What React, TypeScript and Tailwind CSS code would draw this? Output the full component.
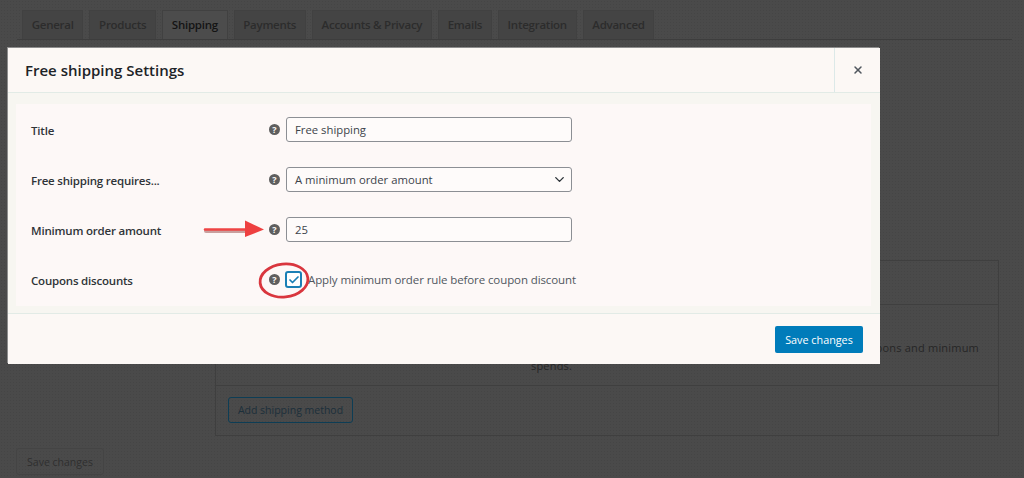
import React from 'react';
import { ChevronDown, Check, X } from 'lucide-react';

const TABS = ['General', 'Products', 'Shipping', 'Payments', 'Accounts & Privacy', 'Emails', 'Integration', 'Advanced'];

const Help: React.FC = () => (
  <span className="w-[11px] h-[11px] shrink-0 rounded-full bg-[#5e5e5e] text-[#fdf8f7] text-[9px] leading-[11px] font-bold text-center">?</span>
);

const Row: React.FC<{ label: string; children: React.ReactNode }> = ({ label, children }) => (
  <div className="flex items-center h-[25px] mb-[25px]">
    <div className="w-[238px] shrink-0 pt-[2px] text-[11.5px] font-semibold tracking-[-0.2px] text-[#2f3438]">{label}</div>
    <Help />
    <div className="ml-[6px] flex items-center">{children}</div>
  </div>
);

const App: React.FC = () => {
  return (
    <div className="relative w-[1024px] h-[478px] overflow-hidden bg-[#4a4a4a] bg-[radial-gradient(#454545_1px,transparent_1px)] bg-[length:3px_3px] font-['Open_Sans','Noto_Sans',sans-serif]">
      {/* page behind the overlay */}
      <div className="mx-[17px] w-[990px] pt-[10px] pl-[5px] h-[29px] box-content border-b border-[#3d3d3d] flex gap-[6px]">
        {TABS.map((tab) => (
          <div
            key={tab}
            className={`px-[8.7px] h-[29px] border border-b-0 border-[#414141] text-[11.5px] font-semibold leading-[27px] tracking-[-0.25px] whitespace-nowrap ${
              tab === 'Shipping' ? 'bg-[#4c4c4c] text-[#141414]' : 'bg-[#444444] text-[#2c2c2c]'
            }`}
          >
            {tab}
          </div>
        ))}
      </div>

      <div className="ml-[215px] mt-[220px] w-[784px] h-[176px] border border-[#3f3f3f] flex flex-col">
        <div className="h-[44px] border-b border-[#3f3f3f]" />
        <div className="h-[81px] border-b border-[#3f3f3f] pt-[34px] pr-[19px] text-[11px] leading-[18px] tracking-[0.2px] text-[#262626] whitespace-nowrap">
          <div className="flex justify-end">Free shipping is a special method which can be triggered with coupons and minimum</div>
          <div className="pl-[315px]">spends.</div>
        </div>
        <div className="pl-[12px] pt-[11px]">
          <div className="w-[125px] h-[26px] border border-[#0d3d55] rounded-[3px] text-[10.5px] leading-[24px] text-center text-[#1c2f3a]">Add shipping method</div>
        </div>
      </div>

      <div className="ml-[16px] mt-[12px] w-[88px] h-[27px] border border-[#444444] rounded-[3px] text-[10.5px] leading-[27px] text-center text-[#2f2f2f]">Save changes</div>

      {/* modal */}
      <div className="absolute left-[8px] top-[48px] w-[872px] h-[316px] bg-[#fcf8f5] flex flex-col shadow-[-1px_-1px_0_#8d8d8d]">
        <div className="h-[45px] shrink-0 flex border-b border-[#e2ebe6]">
          <div className="flex-1 pl-[17px] text-[15px] leading-[44px] font-semibold text-[#1d2327]">Free shipping Settings</div>
          <div className="w-[46px] border-l border-[#dce9e8] flex items-center justify-center">
            <X size={12} strokeWidth={3} className="text-[#50575e]" />
          </div>
        </div>

        <div className="h-[221px] shrink-0 bg-[#f7f6f1] pt-[11px] pl-[8px] pr-[9px] border-b border-[#e2ebe6]">
          <div className="h-[202px] bg-[#fdf8f7] pt-[13px] pl-[15px]">
            <Row label="Title">
              <div className="w-[286px] h-[25px] border border-[#8c8f94] rounded-[3px] bg-[#fefbfa] px-[8px] text-[11.3px] leading-[23px] text-[#3c434a]">Free shipping</div>
            </Row>
            <Row label="Free shipping requires...">
              <div className="w-[286px] h-[25px] border border-[#8c8f94] rounded-[3px] bg-[#fefbfa] pl-[8px] pr-[4px] text-[11.3px] leading-[23px] text-[#3c434a] flex items-center justify-between">
                A minimum order amount
                <ChevronDown size={15} strokeWidth={2.2} className="text-[#2c3338]" />
              </div>
            </Row>
            <Row label="Minimum order amount">
              <div className="w-[286px] h-[25px] border border-[#8c8f94] rounded-[3px] bg-[#fefbfa] px-[8px] text-[11.3px] leading-[23px] text-[#3c434a]">25</div>
            </Row>
            <Row label="Coupons discounts">
              <div className="flex items-center -ml-[1px]">
                <div className="w-[17px] h-[17px] border-2 border-[#1a7fb5] rounded-[3px] bg-white flex items-center justify-center">
                  <Check size={12} strokeWidth={3.5} className="text-[#1a7fb5]" />
                </div>
                <span className="ml-[6px] text-[11.5px] tracking-[-0.1px] text-[#50575e] whitespace-nowrap">Apply minimum order rule before coupon discount</span>
              </div>
            </Row>
          </div>
        </div>

        <div className="flex-1 flex justify-end items-center pr-[17px]">
          <div className="w-[88px] h-[27px] bg-[#007cba] rounded-[2px] text-[10.8px] leading-[27px] text-center text-white">Save changes</div>
        </div>
      </div>

      {/* red annotations */}
      <svg className="absolute left-[200px] top-[215px]" width="120" height="90" viewBox="0 0 120 90" fill="none">
        <path d="M5 14.5 H46" stroke="#c9a09e" strokeWidth="4" strokeLinecap="round" transform="translate(1 1.5)" />
        <path d="M5 14.5 H46" stroke="#ee4444" strokeWidth="2.5" strokeLinecap="round" />
        <path d="M45 5.5 L64 14.5 L45 22 Z" fill="#ee4040" />
        <ellipse cx="84" cy="65.5" rx="24" ry="16.5" stroke="#d9363e" strokeWidth="2.8" transform="rotate(-6 84 65.5)" />
      </svg>
    </div>
  );
};

export default App;
